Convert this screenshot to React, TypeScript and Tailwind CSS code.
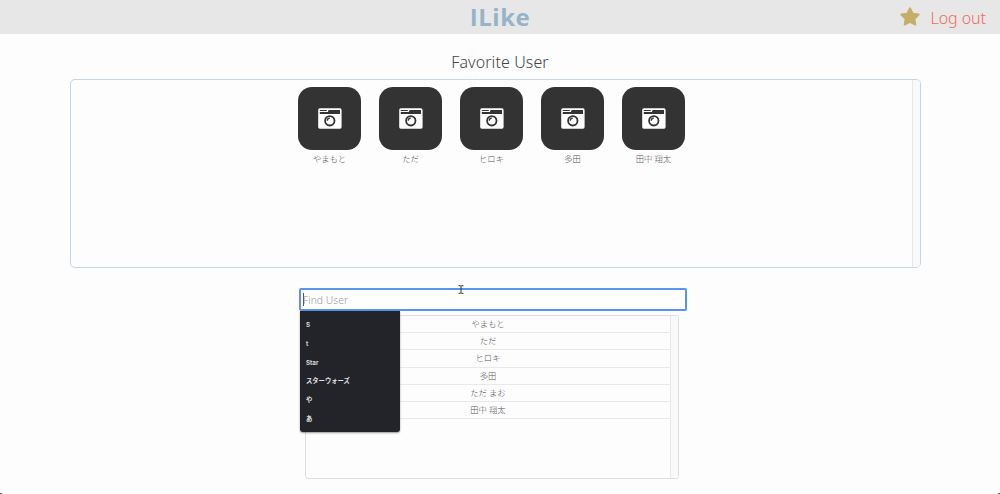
import React from "react";

const favorites = ["やまもと", "ただ", "ヒロキ", "多田", "田中 翔太"];
const users = ["やまもと", "ただ", "ヒロキ", "多田", "ただ まお", "田中 翔太"];
const suggestions = ["S", "t", "Star", "スターウォーズ", "や", "あ"];

function Camera() {
  return (
    <svg viewBox="0 0 24 21" className="h-[21px] w-6">
      <rect x="0.2" y="0.3" width="23.4" height="20.4" rx="1.6" fill="#fff" />
      <path d="M1.8 3.1V1.9h7v1.2zM1.8 4.1h8l.8-2H22v4H1.8z" fill="#333" />
      <circle cx="11.8" cy="12.8" r="4.7" fill="#fff" stroke="#333" strokeWidth="1.8" />
      <path d="M9.3 12.7a2.5 2.5 0 0 1 2.5-2.5" fill="none" stroke="#333" strokeWidth="1.3" />
    </svg>
  );
}

function Scrollbar() {
  return <div className="w-2 shrink-0 border-l border-[#e8e8e8] bg-[#f9f9f9]" />;
}

export default function App() {
  return (
    <div className="relative h-[494px] overflow-hidden bg-[#fdfdfd] font-['Noto_Sans','Noto_Sans_CJK_JP',sans-serif] font-light text-[#555]">
      <header className="grid h-[34px] grid-cols-3 items-center bg-[#e7e7e7]">
        <h1 className="col-start-2 text-center font-['Open_Sans',sans-serif] text-[24px] leading-[34px] font-bold tracking-[0.5px] text-[#96b3ca]">
          ILike
        </h1>
        <div className="flex items-center justify-end gap-[11px] pr-[14px]">
          <svg viewBox="0 0 20 19" className="mb-px h-[19px] w-5">
            <path
              d="M10 1.2l2.8 5.4 5.9.9-4.2 4.3.9 5.9-5.4-2.7-5.4 2.7.9-5.9L1.3 7.5l5.9-.9z"
              fill="#c5ae69"
              stroke="#c5ae69"
              strokeWidth="1.8"
              strokeLinejoin="round"
            />
          </svg>
          <a className="pt-[2px] text-[16px] leading-[32px] tracking-[-0.05px] text-[#ee6b5d]">Log out</a>
        </div>
      </header>

      <h2 className="pt-4 text-center text-[16px] leading-6 tracking-[0.1px] text-[#444]">Favorite User</h2>

      <section className="mt-[5px] ml-[70px] flex h-[189px] w-[851px] overflow-hidden rounded-[5px] border border-[#c3d6e5]">
        <div className="flex flex-1 justify-center gap-[18px] pt-[7px]">
          {favorites.map((name) => (
            <div key={name} className="flex w-[63px] flex-col items-center">
              <div className="flex size-[63px] items-center justify-center rounded-[14px] bg-[#333]">
                <Camera />
              </div>
              <span className="mt-[2px] text-[8.3px] leading-[14px] whitespace-nowrap">{name}</span>
            </div>
          ))}
        </div>
        <Scrollbar />
      </section>

      <div className="relative mt-5 ml-[299px] w-[388px]">
        <div className="flex h-[23px] items-center rounded-[2px] border-2 border-[#5795ef] bg-white pl-[2px]">
          <span className="h-[13px] w-px bg-[#555]" />
          <span className="-ml-px pt-[2px] text-[10.4px] text-[#999]">Find User</span>
        </div>
        <svg viewBox="0 0 6 9" className="absolute top-[-3px] left-[159px] h-[9px] w-[6px]">
          <path d="M.5.7h1.7L3 1.3 3.8.7h1.7M3 1.3v6.4M.5 8.3h1.7L3 7.7l.8.6h1.7" fill="none" stroke="#333" />
        </svg>
        <ul className="absolute top-[23px] left-px z-10 h-[121px] w-[100px] rounded-b-[3px] bg-[#222429] pt-[5px] font-['Inter','Noto_Sans_CJK_JP',sans-serif] shadow-[0_1px_2px_rgba(0,0,0,0.4)]">
          {suggestions.map((text) => (
            <li key={text} className="h-[18.8px] pl-[6px] text-[6.3px] leading-[18.8px] font-semibold text-[#e0e0e0]">
              {text}
            </li>
          ))}
        </ul>
      </div>

      <section className="mt-1 ml-[305px] flex h-[164px] w-[374px] overflow-hidden rounded-[3px] border border-[#dedede]">
        <ul className="flex-1">
          {users.map((name) => (
            <li key={name} className="h-[17.2px] border-b border-[#e9e9e9] text-center text-[8.3px] leading-[16.5px]">
              {name}
            </li>
          ))}
        </ul>
        <Scrollbar />
      </section>
      <span className="absolute bottom-0 left-0 h-px w-[2px] bg-[#666]" />
      <span className="absolute right-0 bottom-0 h-px w-[2px] bg-[#666]" />
    </div>
  );
}
